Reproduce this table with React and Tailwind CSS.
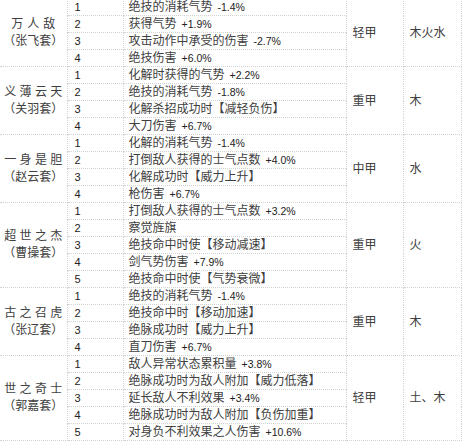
import React from 'react';

const sets = [
  {
    name: '万人敌',
    wide: true,
    suit: '（张飞套）',
    armor: '轻甲',
    element: '木火水',
    rows: [
      ['绝技的消耗气势', '-1.4%'],
      ['获得气势', '+1.9%'],
      ['攻击动作中承受的伤害', '-2.7%'],
      ['绝技伤害', '+6.0%'],
    ],
  },
  {
    name: '义 薄 云 天',
    suit: '（关羽套）',
    armor: '重甲',
    element: '木',
    rows: [
      ['化解时获得的气势', '+2.2%'],
      ['绝技的消耗气势', '-1.8%'],
      ['化解杀招成功时【减轻负伤】'],
      ['大刀伤害', '+6.7%'],
    ],
  },
  {
    name: '一 身 是 胆',
    suit: '（赵云套）',
    armor: '中甲',
    element: '水',
    rows: [
      ['化解的消耗气势', '-1.4%'],
      ['打倒敌人获得的士气点数', '+4.0%'],
      ['化解成功时【威力上升】'],
      ['枪伤害', '+6.7%'],
    ],
  },
  {
    name: '超 世 之 杰',
    suit: '（曹操套）',
    armor: '重甲',
    element: '火',
    rows: [
      ['打倒敌人获得的士气点数', '+3.2%'],
      ['察觉旌旗'],
      ['绝技命中时使【移动减速】'],
      ['剑气势伤害', '+7.9%'],
      ['绝技命中时使【气势衰微】'],
    ],
  },
  {
    name: '古 之 召 虎',
    suit: '（张辽套）',
    armor: '重甲',
    element: '木',
    rows: [
      ['绝技的消耗气势', '-1.4%'],
      ['绝技命中时【移动加速】'],
      ['绝脉成功时【威力上升】'],
      ['直刀伤害', '+6.7%'],
    ],
  },
  {
    name: '世 之 奇 士',
    suit: '（郭嘉套）',
    armor: '轻甲',
    element: '土、木',
    rows: [
      ['敌人异常状态累积量', '+3.8%'],
      ['绝脉成功时为敌人附加【威力低落】'],
      ['延长敌人不利效果', '+3.4%'],
      ['绝脉成功时为敌人附加【负伤加重】'],
      ['对身负不利效果之人伤害', '+10.6%'],
    ],
  },
];

const line = 'border border-dotted border-[#d2d2d2]';

export default function App() {
  return (
    <div
      className="w-[463px] h-[446px] overflow-hidden bg-white text-[#404040]"
      style={{ fontFamily: '"Liberation Sans", "Noto Sans CJK SC", sans-serif' }}
    >
      <table className="-mt-[2px] w-[461px] table-fixed border-collapse text-[12px] leading-none">
        <colgroup>
          <col className="w-[67px]" />
          <col className="w-[56px]" />
          <col className="w-[223px]" />
          <col className="w-[57px]" />
          <col className="w-[58px]" />
        </colgroup>
        <tbody>
          {sets.map((s) =>
            s.rows.map((r, i) => (
              <tr key={s.suit + i} className="h-[17px]">
                {i === 0 && (
                  <td rowSpan={s.rows.length} className={`${line} border-l-0 p-0 text-center align-middle`}>
                    <div className={`leading-[17px] ${s.wide ? 'tracking-[4px] pl-[4px]' : ''}`}>{s.name}</div>
                    <div className="leading-[17px]">{s.suit}</div>
                  </td>
                )}
                <td className={`${line} border-l-[#c8c8c8] border-l-solid p-0 pl-[7px] text-[11px] text-[#222]`}>{i + 1}</td>
                <td className={`${line} p-0 pl-[5px] whitespace-nowrap`}>
                  {r[0]}
                  {r[1] && <span className="ml-[5px] text-[10.5px] text-[#222]">{r[1]}</span>}
                </td>
                {i === 0 && (
                  <td rowSpan={s.rows.length} className={`${line} p-0 pl-[6px] align-middle`}>
                    {s.armor}
                  </td>
                )}
                {i === 0 && (
                  <td rowSpan={s.rows.length} className={`${line} p-0 pl-[6px] align-middle`}>
                    {s.element}
                  </td>
                )}
              </tr>
            ))
          )}
        </tbody>
      </table>
    </div>
  );
}
